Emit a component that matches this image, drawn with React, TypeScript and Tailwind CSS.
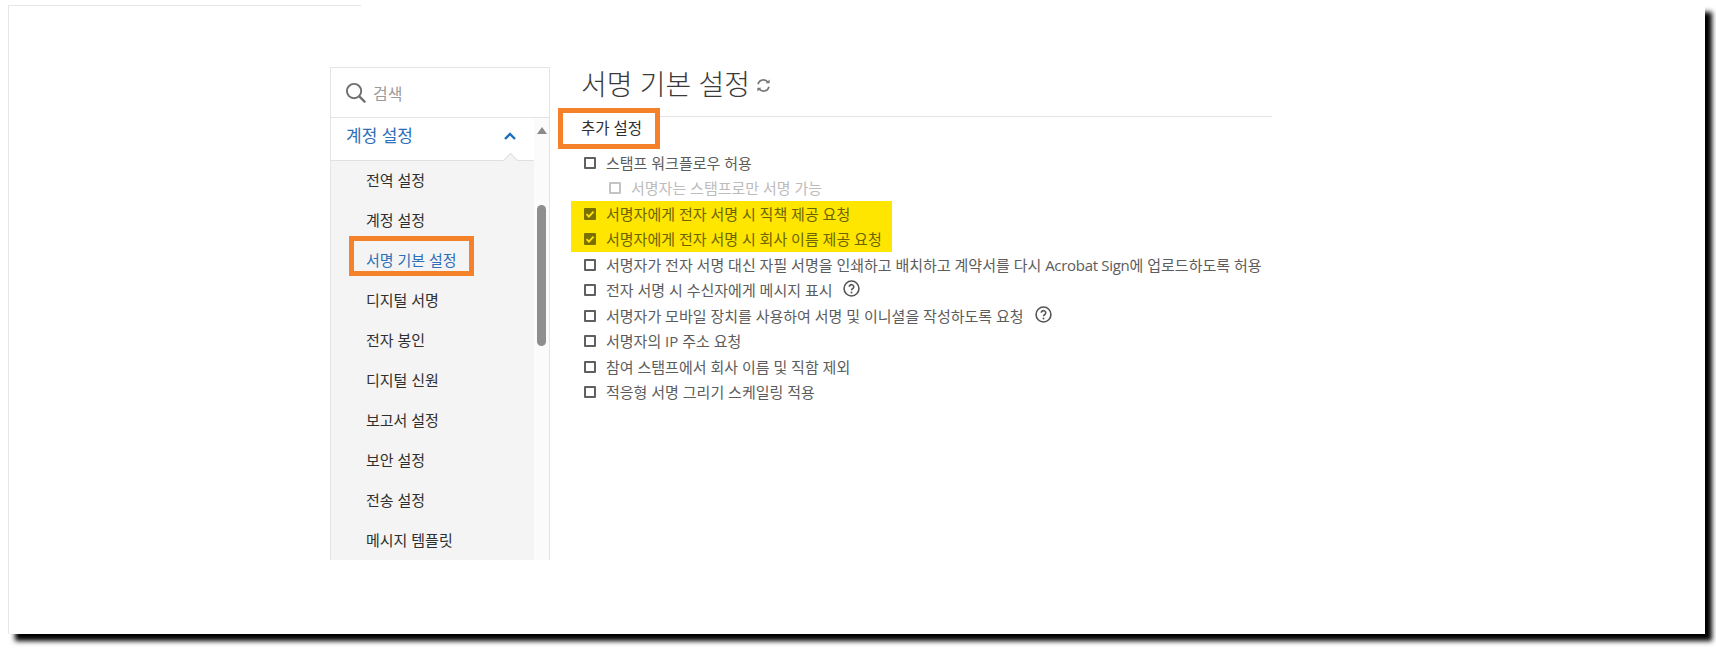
import type { ReactNode } from "react";

const FONT = "font-['Open_Sans','Noto_Sans_CJK_KR',sans-serif]";

const navItems = [
  "전역 설정",
  "계정 설정",
  "서명 기본 설정",
  "디지털 서명",
  "전자 봉인",
  "디지털 신원",
  "보고서 설정",
  "보안 설정",
  "전송 설정",
  "메시지 템플릿",
];

const SearchIcon = () => (
  <svg width="21" height="21" viewBox="0 0 22 22" fill="none" stroke="#707070" strokeWidth="2">
    <circle cx="9.5" cy="9.5" r="7.5" />
    <path d="M15 15l5.5 5.5" strokeWidth="2.4" strokeLinecap="round" />
  </svg>
);

const RefreshIcon = () => (
  <svg width="15" height="15" viewBox="0 0 15 15" fill="none" stroke="#777777" strokeWidth="1.6">
    <path d="M2 6.2A5.6 5.6 0 0 1 12 4.2" />
    <path d="M13 8.8A5.6 5.6 0 0 1 3 10.8" />
    <path d="M9.6 5.2h4V1.4z" fill="#777777" stroke="none" />
    <path d="M5.4 9.8h-4v3.8z" fill="#777777" stroke="none" />
  </svg>
);

const HelpIcon = () => (
  <svg width="17" height="17" viewBox="0 0 16 16" fill="none" className="ml-[1px] -mt-[3px]">
    <circle cx="8" cy="8" r="7" stroke="#555555" strokeWidth="1.5" />
    <path d="M5.9 6.4a2.1 2 0 1 1 3.3 1.6c-.8.5-1.2.9-1.2 1.7" stroke="#555555" strokeWidth="1.5" />
    <circle cx="8" cy="11.8" r="0.9" fill="#555555" />
  </svg>
);

const Check = ({ checked, disabled }: { checked?: boolean; disabled?: boolean }) => {
  if (checked) {
    return (
      <span className="flex h-[12px] w-[12px] shrink-0 items-center justify-center rounded-[1px] bg-[#7a7000]">
        <svg width="10" height="10" viewBox="0 0 10 10" fill="none" stroke="#ffe600" strokeWidth="1.8">
          <path d="M1.5 5.2l2.4 2.4 4.6-5" />
        </svg>
      </span>
    );
  }
  return (
    <span
      className={
        disabled
          ? "h-[12px] w-[12px] shrink-0 rounded-[1px] border-2 border-[#c4c4c4]"
          : "h-[12px] w-[12px] shrink-0 rounded-[1px] border-2 border-[#606060]"
      }
    />
  );
};

const Row = ({
  label,
  checked,
  disabled,
  help,
}: {
  label: ReactNode;
  checked?: boolean;
  disabled?: boolean;
  help?: boolean;
}) => {
  let color = "text-[#5c5c5c]";
  if (disabled) color = "text-[#bcbcbc]";
  if (checked) color = "text-[#6b6400]";
  return (
    <div className={`flex h-[25.5px] items-center gap-[10px] whitespace-nowrap text-[15px] ${color}`}>
      <Check checked={checked} disabled={disabled} />
      <span>{label}</span>
      {help && <HelpIcon />}
    </div>
  );
};

const Sidebar = () => (
  <aside className="flex h-[493px] w-[220px] shrink-0 flex-col border-x border-t border-[#e4e4e4]">
    <div className="flex h-[50px] shrink-0 items-center gap-[7px] border-b border-[#e4e4e4] pl-[14px]">
      <SearchIcon />
      <span className="mt-[2px] text-[16px] text-[#9a9a9a]">검색</span>
    </div>
    <div className="flex min-h-0 flex-1">
      <div className="flex w-[203px] flex-col">
        <div className="relative flex h-[43px] shrink-0 items-center justify-between border-b border-[#e0e0e0] pb-[7px] pl-[15px] pr-[18px]">
          <span className="text-[17px] text-[#2d6fb8]">계정 설정</span>
          <svg width="12" height="8" viewBox="0 0 12 8" fill="none" stroke="#1a6fc0" strokeWidth="2.4">
            <path d="M1 7l5-5 5 5" />
          </svg>
          <span className="absolute bottom-[-6px] right-[18px] h-[11px] w-[11px] rotate-45 border-l border-t border-[#e0e0e0] bg-[#f4f4f4]" />
        </div>
        <div className="-mt-[1px] flex-1 overflow-hidden bg-[#f4f4f4] pl-[35px]">
          {navItems.map((item) => (
            <div
              key={item}
              className={
                item === "서명 기본 설정"
                  ? "relative flex h-[40px] items-center whitespace-nowrap text-[15px] text-[#2d6fb8]"
                  : "flex h-[40px] items-center whitespace-nowrap text-[15px] text-[#2f2f2f]"
              }
            >
              {item}
              {item === "서명 기본 설정" && (
                <span className="absolute left-[-17px] top-[-4px] h-[40px] w-[125px] border-[5px] border-[#f5822a]" />
              )}
            </div>
          ))}
        </div>
      </div>
      <div className="flex flex-1 flex-col items-center bg-[#fbfbfb] pt-[9px]">
        <span className="h-0 w-0 border-x-[5px] border-b-[7px] border-x-transparent border-b-[#8a8a8a]" />
        <span className="mt-[71px] h-[141px] w-[9px] rounded-[5px] bg-[#8e8e8e]" />
      </div>
    </div>
  </aside>
);

export default function App() {
  return (
    <div className={`h-[648px] w-[1716px] overflow-hidden bg-white pl-[8px] pt-[5px] ${FONT}`}>
      <div className="h-[629px] w-[1697px] border-l border-[#e6e6e6] bg-white shadow-[7px_7px_5px_0_#000]">
        <div className="h-px w-[352px] bg-[#e6e6e6]" />
        <div className="ml-[321px] mt-[61px] flex">
          <Sidebar />
          <main className="ml-[8px] w-[714px]">
            <div className="flex h-[50px] items-center gap-[6px] border-b border-[#e4e4e4] pb-[18px] pl-[23px] pt-[2px]">
              <h1 className="text-[28px] font-light leading-none text-[#3a3a3a]">서명 기본 설정</h1>
              <span className="mt-[4px]">
                <RefreshIcon />
              </span>
            </div>
            <div className="-mt-[9px] flex h-[41px] w-[102px] items-center border-[5px] border-[#f5822a] bg-white pl-[18px] text-[15.5px] text-[#2f2f2f]">
              추가 설정
            </div>
            <div className="mt-[1px] pl-[26px]">
              <Row label="스탬프 워크플로우 허용" />
              <div className="pl-[25px]">
                <Row label="서명자는 스탬프로만 서명 가능" disabled />
              </div>
            </div>
            <div className="ml-[13px] w-[321px] bg-[#ffe600] pl-[13px]">
              <Row label="서명자에게 전자 서명 시 직책 제공 요청" checked />
              <Row label="서명자에게 전자 서명 시 회사 이름 제공 요청" checked />
            </div>
            <div className="pl-[26px]">
              <Row
                label={
                  <>
                    서명자가 전자 서명 대신 자필 서명을 인쇄하고 배치하고 계약서를 다시{" "}
                    <span className="tracking-[-0.3px]">Acrobat Sign</span>에 업로드하도록 허용
                  </>
                }
              />
              <Row label="전자 서명 시 수신자에게 메시지 표시" help />
              <Row label="서명자가 모바일 장치를 사용하여 서명 및 이니셜을 작성하도록 요청" help />
              <Row label="서명자의 IP 주소 요청" />
              <Row label="참여 스탬프에서 회사 이름 및 직함 제외" />
              <Row label="적응형 서명 그리기 스케일링 적용" />
            </div>
          </main>
        </div>
      </div>
    </div>
  );
}
